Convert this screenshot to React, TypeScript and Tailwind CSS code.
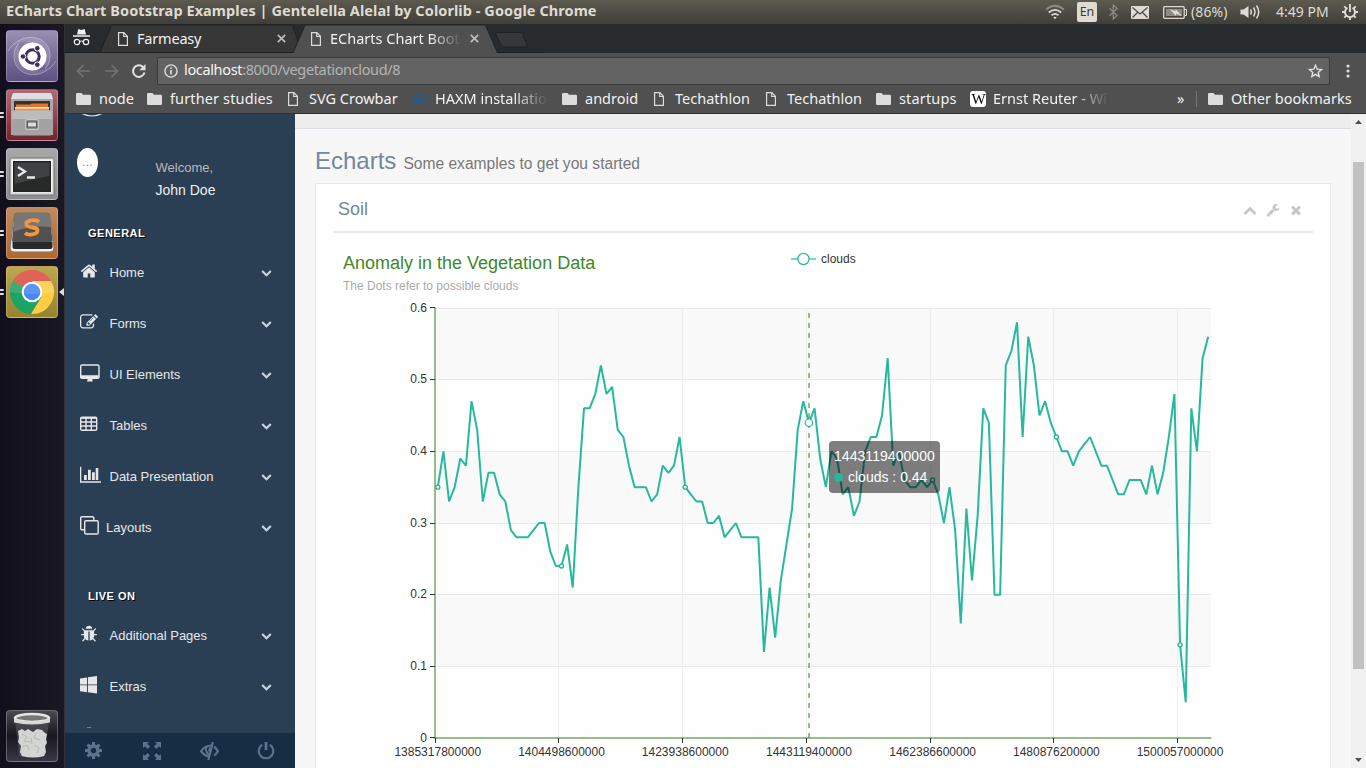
import React from "react";

const values = [
  0.35, 0.4, 0.33, 0.35, 0.39, 0.38, 0.47, 0.43, 0.33, 0.37, 0.37, 0.34, 0.33, 0.29, 0.28, 0.28, 0.28, 0.29, 0.3, 0.3,
  0.26, 0.24, 0.24, 0.27, 0.21, 0.35, 0.46, 0.46, 0.48, 0.52, 0.48, 0.49, 0.43, 0.42, 0.38, 0.35, 0.35, 0.35, 0.33, 0.34,
  0.38, 0.37, 0.38, 0.42, 0.35, 0.34, 0.33, 0.33, 0.3, 0.3, 0.31, 0.28, 0.29, 0.3, 0.28, 0.28, 0.28, 0.28, 0.12, 0.21,
  0.14, 0.22, 0.27, 0.32, 0.43, 0.47, 0.44, 0.46, 0.39, 0.35, 0.4, 0.39, 0.34, 0.35, 0.31, 0.33, 0.4, 0.42, 0.42, 0.45,
  0.53, 0.38, 0.4, 0.36, 0.35, 0.35, 0.36, 0.35, 0.36, 0.34, 0.3, 0.35, 0.29, 0.16, 0.32, 0.22, 0.31, 0.46, 0.44, 0.2,
  0.2, 0.52, 0.54, 0.58, 0.42, 0.56, 0.52, 0.45, 0.47, 0.44, 0.42, 0.4, 0.4, 0.38, 0.4, 0.41, 0.42, 0.4, 0.38, 0.38,
  0.36, 0.34, 0.34, 0.36, 0.36, 0.36, 0.34, 0.38, 0.34, 0.37, 0.42, 0.48, 0.13, 0.05, 0.46, 0.4, 0.53, 0.56,
];
const STEP = 776 / values.length;
const px = (i: number) => 435 + STEP * (i + 0.5);
const py = (v: number) => 308 + (0.6 - v) * (430 / 0.6);

const yTicks = [
  { label: "0.6", y: 308 },
  { label: "0.5", y: 379 },
  { label: "0.4", y: 451 },
  { label: "0.3", y: 523 },
  { label: "0.2", y: 594 },
  { label: "0.1", y: 666 },
  { label: "0", y: 738 },
];
const xTicks = [
  { label: "1385317800000", x: 435 },
  { label: "1404498600000", x: 558 },
  { label: "1423938600000", x: 682 },
  { label: "1443119400000", x: 806 },
  { label: "1462386600000", x: 930 },
  { label: "1480876200000", x: 1053 },
  { label: "1500057000000", x: 1177 },
];

function Chart() {
  const line = values.map((v, i) => `${px(i).toFixed(2)},${py(v).toFixed(2)}`).join(" ");
  return (
    <svg width="980" height="535" viewBox="333 233 980 535" className="block font-['Liberation_Sans',sans-serif]">
      <text x="343" y="269" fontSize="18" fill="#408829">Anomaly in the Vegetation Data</text>
      <text x="343" y="290" fontSize="12" fill="#aaaaaa">The Dots refer to possible clouds</text>
      <line x1="791" x2="816" y1="259" y2="259" stroke="#26B99A" strokeOpacity=".6" strokeWidth="2" />
      <circle cx="803.5" cy="259" r="5.6" fill="#fff" stroke="#26B99A" strokeWidth="1.3" />
      <text x="821" y="263" fontSize="12" fill="#333">clouds</text>

      {[308, 451, 594].map((y) => (
        <rect key={y} x="435" y={y} width="776" height="72" fill="#f9f9f9" />
      ))}
      {[379, 523, 666].map((y) => (
        <rect key={y} x="435" y={y} width="776" height="72" fill="#fefefe" />
      ))}
      {yTicks.slice(0, 6).map((t) => (
        <rect key={t.y} x="436" y={t.y} width="775" height="1" fill="#eaeaea" />
      ))}
      {xTicks.slice(1).map((t) => (
        <rect key={t.x} x={t.x} y="308" width="1" height="430" fill="#eeeeee" />
      ))}
      <rect x="434" y="307.5" width="2" height="431" fill="#408829" fillOpacity=".55" />
      <rect x="434" y="737" width="777.5" height="2" fill="#408829" fillOpacity=".55" />
      {yTicks.map((t) => (
        <g key={t.label}>
          <rect x="430" y={t.y === 308 ? 307 : t.y === 738 ? 737 : t.y} width="5" height="1" fill="#333" />
          <text x="427" y={t.y + 4} fontSize="12" fill="#333" textAnchor="end">{t.label}</text>
        </g>
      ))}
      {xTicks.map((t, i) => (
        <g key={t.label}>
          <rect x={t.x} y="738" width="1" height="5" fill="#333" />
          <text x={px(i * 22)} y="756" fontSize="12" fill="#333" textAnchor="middle">{t.label}</text>
        </g>
      ))}
      <polyline points={line} fill="none" stroke="#26B99A" strokeWidth="2" strokeLinejoin="bevel" />
      <line x1="809" x2="809" y1="738" y2="308" stroke="#408829" strokeOpacity=".55" strokeWidth="2" strokeDasharray="5 5" />
      {[0, 22, 44, 88, 110, 132].map((i) => (
        <circle key={i} cx={px(i)} cy={py(values[i])} r="2" fill="#fff" stroke="#26B99A" strokeWidth="1.4" />
      ))}
      <circle cx={px(66)} cy={py(0.44)} r="3.7" fill="#fff" stroke="#26B99A" strokeWidth="1.2" />
    </svg>
  );
}

const HOME =
  "M1472 992v480q0 26-19 45t-45 19h-384v-384h-256v384h-384q-26 0-45-19t-19-45v-480q0-1 .5-3t.5-3l575-474 575 474q1 2 1 6zm223-69l-62 74q-8 9-21 11h-3q-13 0-21-7l-692-577-692 577q-12 8-24 7-13-2-21-11l-62-74q-8-10-7-23.5t11-21.5l719-599q32-26 76-26t76 26l244 204v-195q0-14 9-23t23-9h192q14 0 23 9t9 23v408l219 182q10 8 11 21.5t-7 23.5z";
const EDIT =
  "M888 1184l116-116-152-152-116 116v56h96v96h56zm440-720q-16-16-33 1l-350 350q-17 17-1 33t33-1l350-350q17-17 1-33zm80 594v190q0 119-84.5 203.5t-203.5 84.5h-832q-119 0-203.5-84.5t-84.5-203.5v-832q0-119 84.5-203.5t203.5-84.5h832q63 0 117 25 15 7 18 23 3 17-9 29l-49 49q-14 14-32 8-23-6-45-6h-832q-66 0-113 47t-47 113v832q0 66 47 113t113 47h832q66 0 113-47t47-113v-126q0-13 9-22l64-64q15-15 35-7t20 29zm-96-738l288 288-672 672h-288v-288zm444 132l-92 92-288-288 92-92q28-28 68-28t68 28l152 152q28 28 28 68t-28 68z";
const BUG =
  "M1696 960q0 26-19 45t-45 19h-224q0 171-67 290l208 209q19 19 19 45t-19 45q-18 19-45 19t-45-19l-198-197q-5 5-15 13t-42 28.5-65 36.5-82 29-97 13v-896h-128v896q-51 0-101.5-13.5t-87-33-66-39-43.5-32.5l-15-14-183 207q-20 21-48 21-24 0-43-16-19-18-20.5-44.5t15.5-46.5l202-227q-58-114-58-274h-224q-26 0-45-19t-19-45 19-45 45-19h224v-294l-173-173q-19-19-19-45t19-45 45-19 45 19l173 173h844l173-173q19-19 45-19t45 19 19 45-19 45l-173 173v294h224q26 0 45 19t19 45zm-480-576h-640q0-133 93.5-226.5t226.5-93.5 226.5 93.5 93.5 226.5z";
const DOWN =
  "M1683 808l-742 741q-19 19-45 19t-45-19l-742-741q-19-19-19-45.5t19-45.5l166-165q19-19 45-19t45 19l531 531 531-531q19-19 45-19t45 19l166 165q19 19 19 45.5t-19 45.5z";
const UP =
  "M1683 1331l-166 165q-19 19-45 19t-45-19l-531-531-531 531q-19 19-45 19t-45-19l-166-165q-19-19-19-45.5t19-45.5l742-741q19-19 45-19t45 19l742 741q19 19 19 45.5t-19 45.5z";
const WRENCH =
  "M448 1472q0-26-19-45t-45-19-45 19-19 45 19 45 45 19 45-19 19-45zm644-420l-682 682q-37 37-90 37-52 0-91-37l-106-108q-38-36-38-90 0-53 38-91l681-681q39 98 114.5 173.5t173.5 114.5zm634-435q0 39-23 106-47 134-164.5 217.5t-258.5 83.5q-185 0-316.5-131.5t-131.5-316.5 131.5-316.5 316.5-131.5q58 0 121.5 16.5t107.5 46.5q16 11 16 28t-16 28l-293 169v224l193 107q5-3 79-48.5t135.5-81 70.5-35.5q15 0 23.5 10t8.5 25z";
const TIMES =
  "M1490 1322q0 40-28 68l-136 136q-28 28-68 28t-68-28l-294-294-294 294q-28 28-68 28t-68-28l-136-136q-28-28-28-68t28-68l294-294-294-294q-28-28-28-68t28-68l136-136q28-28 68-28t68 28l294 294 294-294q28-28 68-28t68 28l136 136q28 28 28 68t-28 68l-294 294 294 294q28 28 28 68z";

function Fa({ d, size = 18 }: { d: string; size?: number }) {
  return (
    <svg width={size} height={size} viewBox="0 0 1792 1792" fill="currentColor" className="shrink-0">
      <path d={d} />
    </svg>
  );
}

const Desktop = () => (
  <svg width="20" height="18" viewBox="0 0 20 18" fill="none">
    <rect x=".7" y="1" width="18.300" height="13.400" rx="1.400" stroke="currentColor" strokeWidth="1.400" />
    <path d="M1 11.200h17.800v3H1zM8 14h4l.8 3.500H7z" fill="currentColor" />
  </svg>
);
const Table = () => (
  <svg width="18" height="18" viewBox="0 0 18 18" fill="none" stroke="currentColor">
    <rect x=".7" y="2.200" width="16" height="13" rx="1.200" strokeWidth="1.400" />
    <path d="M1 3h15.500" strokeWidth="1.800" />
    <path d="M1 7h15.500M1 11h15.500M6 3v12.500M11.300 3v12.500" strokeWidth="1.400" />
  </svg>
);
const Bars = () => (
  <svg width="21" height="18" viewBox="0 0 21 18" fill="currentColor">
    <path d="M0 .7h1.300v14.600H21v1.400H0zM4 9h2.800v5H4zM8 3.700h2.800V14H8zM12 6.300h2.800V14H12zM15.700 2h2.600v12h-2.600z" />
  </svg>
);
const Clone = () => (
  <svg width="19" height="19" viewBox="0 0 19 19" fill="none" stroke="currentColor" strokeWidth="1.400">
    <rect x="4.700" y="4.700" width="13.500" height="13.300" rx="1.200" />
    <path d="M4.500 13.800H2A1.300 1.300 0 0 1 .7 12.500V2A1.300 1.300 0 0 1 2 .7h10.500a1.300 1.300 0 0 1 1.300 1.300v2.500" />
  </svg>
);
const Windows = () => (
  <svg width="18" height="18" viewBox="0 0 18 18" fill="currentColor">
    <path d="M0 2.400L7 1.400v7H0zM7.900 1.300L17 0v8.400H7.900zM0 9.200h7v7l-7-1zM7.900 9.200H17v8.400l-9.100-1.300z" />
  </svg>
);

function MenuRow({ icon, label, tight }: { icon: React.ReactNode; label: string; tight?: boolean }) {
  return (
    <li className="flex h-[51px] items-center pl-[15px] pr-[23px] text-[13px] text-[#e7e7e7]">
      <span className={tight ? "-mt-1 w-[26px]" : "-mt-1 w-[29.500px]"}>{icon}</span>
      <span className="flex-1 whitespace-nowrap">{label}</span>
      <span className="-mt-px text-[#c9d3dd]"><Fa d={DOWN} size={11} /></span>
    </li>
  );
}

function Sidebar() {
  return (
    <aside className="flex w-[230px] shrink-0 flex-col bg-[#2A3F54] font-['Liberation_Sans',sans-serif]">
      <div className="flex min-h-0 flex-1 flex-col overflow-hidden">
        <svg className="ml-[15px] shrink-0" width="24" height="4" viewBox="0 0 24 4">
          <path d="M1 -1Q12 5 23 -1" fill="none" stroke="#eaeaea" strokeWidth="1.200" />
        </svg>
        <div className="flex h-[103px] shrink-0 pl-3 pt-[30px]">
          <div className="flex h-[29px] w-[21px] justify-center rounded-[50%] bg-white pt-[7px] text-[12px] leading-[14px] tracking-[0.300px] text-[#7a8a9c]">...</div>
          <div className="ml-[57.500px] mt-[10px]">
            <div className="text-[13px] leading-[19px] text-[#BAB8B8]">Welcome,</div>
            <div className="mt-[3px] text-[14px] leading-[20px] text-[#ECF0F1]">John Doe</div>
          </div>
        </div>
        <h3 className="flex h-[26px] shrink-0 items-start pl-[23px] pt-[4px] text-[11px] font-bold leading-4 tracking-[0.500px] text-white [text-shadow:1px_1px_#000]">
          GENERAL
        </h3>
        <ul className="shrink-0">
          <MenuRow icon={<Fa d={HOME} />} label="Home" />
          <MenuRow icon={<Fa d={EDIT} />} label="Forms" />
          <MenuRow icon={<Desktop />} label="UI Elements" />
          <MenuRow icon={<Table />} label="Tables" />
          <MenuRow icon={<Bars />} label="Data Presentation" />
          <MenuRow icon={<Clone />} label="Layouts" tight />
        </ul>
        <h3 className="flex h-[57px] shrink-0 items-end pb-[6px] pl-[23px] text-[11px] font-bold tracking-[0.500px] text-white [text-shadow:1px_1px_#000]">
          LIVE ON
        </h3>
        <ul className="shrink-0">
          <MenuRow icon={<Fa d={BUG} />} label="Additional Pages" />
          <MenuRow icon={<Windows />} label="Extras" />
        </ul>
        <div className="ml-[22px] mt-[15px] h-px w-1 shrink-0 bg-[#70808f]" />
      </div>
      <div className="flex h-[35px] shrink-0 items-center justify-between bg-[#172D44] pl-5 pr-5 text-[#5A738E]">
        <svg width="17" height="17" viewBox="0 0 17 17" fill="none" stroke="currentColor">
          <circle cx="8.500" cy="8.500" r="4.500" strokeWidth="3.600" />
          <path d="M8.500 0v3M8.500 14v3M0 8.500h3M14 8.500h3M2.500 2.500l2.100 2.100M12.400 12.400l2.100 2.100M2.500 14.500l2.100-2.100M12.400 4.600l2.100-2.100" strokeWidth="3" />
        </svg>
        <svg className="ml-[3px]" width="18" height="18" viewBox="0 0 18 18" fill="currentColor">
          <path d="M0 0h6L4.200 1.800 7 4.600 4.600 7 1.800 4.200 0 6zM18 0v6l-1.800-1.800L13.400 7 11 4.600l2.800-2.800L12 0zM0 18v-6l1.800 1.800L4.600 11 7 13.400l-2.800 2.800L6 18zM18 18h-6l1.800-1.800L11 13.400 13.400 11l2.800 2.800L18 12z" />
        </svg>
        <svg width="19" height="18" viewBox="0 0 19 18" fill="none" stroke="currentColor" strokeWidth="2.200">
          <path d="M8.500 14.300C5 13.700 2.700 11.600 1.200 9.200 3.300 5.800 6 3.700 11 3.500M14 4.700c1.700 1.300 3 2.900 3.900 4.500-.9 1.700-2 3-3.800 4.300" />
          <path d="M6.300 5c-1 3 .3 6 2.700 7.300M10 5.500L9 9.500" strokeWidth="2" />
          <path d="M12.900 0L8.300 18" strokeWidth="2.200" />
        </svg>
        <svg width="18" height="18" viewBox="0 0 18 18" fill="none" stroke="currentColor" strokeWidth="2.200">
          <path d="M5.200 2.700a7.300 7.300 0 1 0 7.600 0" />
          <path d="M9 0v8" strokeWidth="2.800" />
        </svg>
      </div>
    </aside>
  );
}

function Main() {
  return (
    <main className="flex min-w-0 flex-1 flex-col overflow-hidden bg-[#F7F7F7] font-['Liberation_Sans',sans-serif]">
      <div className="h-[15px] shrink-0 border-b border-[#D9DEE4] bg-[#EDEDED]" />
      <h3 className="flex h-[54px] shrink-0 items-baseline pl-5 pt-[14px] text-[24px] leading-[36px] text-[#73879C]">
        Echarts<small className="ml-[7px] text-[15.600px] text-[#777]">Some examples to get you started</small>
      </h3>
      <section className="relative ml-5 mr-5 flex shrink-0 flex-col border border-[#E6E9ED] bg-white px-[17px]">
        <header className="flex h-[49px] items-center justify-between border-b-2 border-[#E6E9ED] pl-[5px] pr-[10px]">
          <h2 className="mt-[3px] text-[18px] text-[#73879C]">Soil</h2>
          <div className="mt-[5px] flex items-center gap-[9px] text-[#c5c7cb]">
            <Fa d={UP} size={14} />
            <Fa d={WRENCH} size={14} />
            <Fa d={TIMES} size={14} />
          </div>
        </header>
        <Chart />
        <div className="absolute left-[513px] top-[257px] h-[52px] w-[111px] rounded bg-black/50 p-[5px] text-[14px] leading-[21px] text-white">
          <div className="tracking-[0.050px]">1443119400000</div>
          <div className="flex items-center">
            <span className="mr-[5px] size-[9px] rounded-full bg-[#26B99A]" />clouds : 0.44
          </div>
        </div>
      </section>
    </main>
  );
}

const Folder = () => (
  <svg width="15" height="12" viewBox="0 0 15 12" fill="#dcdcdc">
    <path d="M0 1.200Q0 0 1.200 0H5.500L7 1.800h6.800q1.200 0 1.200 1.200v7.800q0 1.200-1.200 1.200H1.200Q0 12 0 10.800z" />
  </svg>
);
const Page = () => (
  <svg width="10" height="14" viewBox="0 0 10 14" fill="none" stroke="#dcdcdc">
    <path d="M.6.6h5.200l3.600 3.700v9.100H.6z" strokeWidth="1.200" />
    <path d="M5.700.6v3.900h3.700" strokeWidth="1.200" />
  </svg>
);
const Intel = () => (
  <svg width="17" height="12" viewBox="0 0 16 12" fill="none" stroke="#17619f">
    <path d="M3 2.500C8-.5 15-.3 15.200 3.500c.1 2-1.500 3.600-3 4.500M.7 8.200c-.7-1.700.5-3.500 1.800-4.500M.7 8.200c1 3.300 8 3.300 12.300.6" strokeWidth="1.300" />
    <path d="M4 5v3.300M6 8.300V6q1.500-1 1.800.3v2M9.500 4.500v3.300M11 6.500h1.700M13.300 3.500v4" strokeWidth="1.100" />
  </svg>
);
const Wiki = () => (
  <span className="flex size-4 items-center justify-center rounded-[3px] bg-white font-['Liberation_Serif',serif] text-[15px] leading-none tracking-[-1px] text-black">W</span>
);

function Mark({ icon, label, cls, file }: { icon: React.ReactNode; label: string; cls: string; file?: boolean }) {
  return (
    <div className={"flex shrink-0 items-center " + cls}>
      <span className={file ? "w-[21px] shrink-0" : "w-[23px] shrink-0"}>{icon}</span>
      <span className="whitespace-nowrap">{label}</span>
    </div>
  );
}

const Close = () => (
  <svg width="9" height="9" viewBox="0 0 9 9" stroke="#bdbdbd" strokeWidth="1.700">
    <path d="M.8.8l7.400 7.400M8.200.8L.8 8.200" />
  </svg>
);

function Browser() {
  return (
    <div className="flex h-[90px] shrink-0 flex-col bg-[#505050] font-['Noto_Sans',sans-serif] text-[14.500px] text-[#f2f2f2]">
      <div className="relative flex h-[29px] shrink-0 items-center bg-[#272b2e]">
        <svg className="absolute left-0 top-0" width="480" height="29" viewBox="0 0 480 29">
          <path d="M35 28.500L46 2.500Q47 1 48.500 1H225Q227 1 228 2.500L237 28.500z" fill="#373737" stroke="#1e2022" />
          <path d="M0 28.500H228.500L239.500 2.500Q240.500 1 242 1H418Q420 1 421 2.500L432 28.500H480" fill="none" stroke="#1e2022" />
          <path d="M228.500 29L240 2.500Q241 1.500 242 1.500H418Q419.500 1.500 420.500 2.500L432 29z" fill="#505050" />
          <path d="M432 8.500h23q2 0 2.700 1.500l4.500 11.500q.5 1.500-1 1.500H439q-2 0-2.700-1.500L430.800 10q-.5-1.500 1.200-1.500z" fill="#373737" stroke="#1e2022" />
        </svg>
        <svg className="relative -mt-0.5 ml-2" width="17" height="17" viewBox="0 0 17 17" fill="#f2f2f2">
          <path d="M5.300 0L8.500 1l3.200-1L13 5.500H4zM0 6.300h17v1.500H0z" />
          <circle cx="4" cy="13" r="2.700" fill="none" stroke="#f2f2f2" strokeWidth="1.200" />
          <circle cx="13" cy="13" r="2.700" fill="none" stroke="#f2f2f2" strokeWidth="1.200" />
          <path d="M6.500 12.500q2-1 4 0" fill="none" stroke="#f2f2f2" />
        </svg>
        <div className="relative ml-[28px] flex w-[193px] items-center">
          <Page />
          <span className="ml-[9px] w-[140px] tracking-[-0.200px]">Farmeasy</span>
          <Close />
        </div>
        <div className="relative flex items-center">
          <Page />
          <span className="ml-[9px] w-[132px] whitespace-nowrap [mask-image:linear-gradient(to_right,#000_75%,transparent)]">ECharts Chart Boot</span>
          <span className="ml-2"><Close /></span>
        </div>
      </div>
      <div className="flex h-[35px] shrink-0 items-center pl-[11px] pr-[16px]">
        <svg width="72" height="16" viewBox="0 0 72 16" fill="none">
          <path d="M14 8H2M7.500 2L1.500 8l6 6M29 8h12M35.500 2l6 6-6 6" stroke="#737373" strokeWidth="1.700" />
          <path d="M67.200 4.200A5.800 5.800 0 1 0 68.500 9.500" stroke="#e0e0e0" strokeWidth="2" />
          <path d="M69.500 1v6.200h-6.200z" fill="#e0e0e0" />
        </svg>
        <div className="ml-[9px] flex h-7 flex-1 items-center rounded-[2px] border border-[#3a3a3a] bg-[#636363] pl-[6px] pr-[6px] text-[#b4b4b4]">
          <svg width="14" height="14" viewBox="0 0 14 14" fill="none" stroke="#ddd" strokeWidth="1.400">
            <circle cx="7" cy="7" r="6.100" />
            <path d="M7 6v4.500M7 3.200v1.600" strokeWidth="1.700" />
          </svg>
          <span className="-mt-px ml-[6px] flex-1 whitespace-nowrap tracking-[-0.350px]"><span className="text-[#f5f5f5]">localhost</span>:8000/vegetationcloud/8</span>
          <svg width="15" height="14" viewBox="0 0 15 14" fill="none" stroke="#e0e0e0" strokeWidth="1.400">
            <path d="M7.500 1.200l1.700 4 4.300.4-3.300 2.800 1 4.200-3.700-2.200-3.700 2.200 1-4.200L1.500 5.600l4.300-.4z" />
          </svg>
        </div>
        <svg className="ml-[16px]" width="4" height="14" viewBox="0 0 4 14" fill="#dcdcdc">
          <circle cx="2" cy="2" r="1.600" />
          <circle cx="2" cy="7" r="1.600" />
          <circle cx="2" cy="12" r="1.600" />
        </svg>
      </div>
      <div className="flex h-[26px] shrink-0 items-center border-b border-[#303030] pb-[3px] pl-[11px]">
        <Mark icon={<Folder />} label="node" cls="w-[71px]" />
        <Mark icon={<Folder />} label="further studies" cls="w-[141px] tracking-[0.130px]" />
        <Mark icon={<Page />} label="SVG Crowbar" cls="w-[124px]" file />
        <Mark icon={<Intel />} label="HAXM installatio" cls="w-[136px] [mask-image:linear-gradient(to_right,#000_75%,transparent)]" />
        <span className="w-[14px]" />
        <Mark icon={<Folder />} label="android" cls="w-[92px]" />
        <Mark icon={<Page />} label="Techathlon" cls="w-[112px]" file />
        <Mark icon={<Page />} label="Techathlon" cls="w-[110px]" file />
        <Mark icon={<Folder />} label="startups" cls="w-[94px] tracking-[0.150px]" />
        <Mark icon={<Wiki />} label="Ernst Reuter - Wi" cls="w-[139px] [mask-image:linear-gradient(to_right,#000_75%,transparent)]" />
        <span className="ml-[68px] w-[19px]">»</span>
        <span className="mr-[11px] h-4 w-px bg-[#777]" />
        <Mark icon={<Folder />} label="Other bookmarks" cls="w-[150px] tracking-[0.050px]" />
      </div>
    </div>
  );
}

function TopBar() {
  return (
    <div className="flex h-6 shrink-0 items-center bg-gradient-to-b from-[#5d5a4f] to-[#3f3e39] pl-[6px] pr-2 font-['Noto_Sans',sans-serif] text-[14.500px] text-[#dfdbd2]">
      <span className="-mt-0.5 flex-1 whitespace-nowrap text-[14.500px] font-bold tracking-[0.070px]">ECharts Chart Bootstrap Examples | Gentelella Alela! by Colorlib - Google Chrome</span>
      <svg width="20" height="16" viewBox="0 0 20 16" fill="none" strokeWidth="1.700">
        <path d="M1 5.500q9-7.500 18 0" stroke="#8d8a80" />
        <path d="M3.800 8.500q6.200-5.200 12.400 0M6.500 11.300q3.500-3 7 0" stroke="#dfdbd2" />
        <path d="M8.300 13.300q1.700-1.300 3.400 0L10 15.300z" fill="#dfdbd2" />
      </svg>
      <span className="ml-3 flex h-5 w-5 items-center justify-center rounded-[2px] bg-[#dfdbd2] text-[12.500px] text-[#3c3b37]">En</span>
      <svg className="ml-3" width="9" height="16" viewBox="0 0 9 16" fill="none" stroke="#8d8a80" strokeWidth="1.300">
        <path d="M.5 4.200l7.500 7.300L4.300 15V1L8 4.500.5 11.800" />
      </svg>
      <svg className="ml-[13px]" width="18" height="13" viewBox="0 0 18 13">
        <rect width="18" height="13" rx="1" fill="#dfdbd2" />
        <path d="M1.500 1.500L9 8l7.500-6.500M1.500 11.500l5-5M16.500 11.500l-5-5" fill="none" stroke="#4a4842" strokeWidth="1.200" />
      </svg>
      <svg className="ml-[14px]" width="24" height="13" viewBox="0 0 24 13" fill="none" stroke="#dfdbd2">
        <rect x=".7" y=".7" width="20.500" height="11.600" rx="1" strokeWidth="1.300" />
        <rect x="3" y="3" width="16" height="7" fill="#8d8a80" stroke="none" />
        <path d="M22 3.500h1.500v6H22" />
        <path d="M6.500 3l6 2.200V3l6.500 7-6-2.200V10z" fill="#dfdbd2" stroke="none" />
      </svg>
      <span className="-mt-px ml-1 w-[37px] whitespace-nowrap text-[14px] tracking-[0.100px]">(86%)</span>
      <svg className="ml-3" width="21" height="16" viewBox="0 0 21 16" fill="none" stroke="#dfdbd2" strokeWidth="1.500">
        <path d="M.5 5.500h3L8.500 2v12l-5-3.500h-3z" fill="#dfdbd2" stroke="none" />
        <path d="M10.500 5.500q1.700 2.500 0 5M13.500 3.500q3 4.500 0 9M16.500 1.500q4.500 6.500 0 13" />
      </svg>
      <span className="-mt-px ml-[15px] w-[53px] whitespace-nowrap text-[14px]">4:49 PM</span>
      <svg className="ml-[13px]" width="16" height="16" viewBox="0 0 16 16" fill="none" stroke="#dfdbd2">
        <path d="M5.500 3.800a5 5 0 1 0 5 0" strokeWidth="1.900" />
        <path d="M8 0v8M0 8h3M13 8h3M8 13v3M2.300 2.300l2 2M13.700 2.300l-2 2M2.300 13.700l2-2M13.700 13.700l-2-2" strokeWidth="1.900" />
      </svg>
    </div>
  );
}

function Tile({ children, cls, open }: { children: React.ReactNode; cls: string; open?: boolean }) {
  return (
    <div className="flex items-center">
      <div className="flex w-[6px] flex-col gap-[2px]">
        {open && <><span className="h-[2px] w-1 rounded-r bg-[#ddd]" /><span className="h-[2px] w-1 rounded-r bg-[#ddd]" /></>}
      </div>
      <div className={"flex size-[52px] items-center justify-center rounded-[4px] border border-white/25 bg-gradient-to-b " + cls}>{children}</div>
    </div>
  );
}

function Launcher() {
  return (
    <nav className="flex w-[65px] shrink-0 flex-col gap-[7px] border-r border-[#333238] bg-gradient-to-r from-[#120f1c] to-[#1b1826] pb-[6px] pt-[6px]">
      <Tile cls="from-[#9890b0] to-[#5c5184]">
        <svg width="50" height="50" viewBox="0 0 50 50" fill="none">
          <path d="M1 20C12 3 33 2 41 16c4 8 2 17-3 22C40 24 33 12 20 11 12 10 5 14 1 20z" fill="#fff" fillOpacity=".14" />
          <path d="M49 30C38 47 17 48 9 34 5 26 7 17 12 12c-2 14 5 26 18 27 8 1 15-3 19-9z" fill="#fff" fillOpacity=".14" />
          <path d="M1 20C12 3 33 2 41 16c4 8 2 17-3 22M49 30C38 47 17 48 9 34 5 26 7 17 12 12" stroke="#fff" strokeOpacity=".3" />
          <circle cx="25.500" cy="25.500" r="14" fill="#fff" />
          <circle cx="25.500" cy="25.500" r="6.700" stroke="#3c2f5c" strokeWidth="3" />
          <circle cx="16" cy="25.500" r="2.800" fill="#3c2f5c" stroke="#fff" />
          <circle cx="30.300" cy="17.300" r="2.800" fill="#3c2f5c" stroke="#fff" />
          <circle cx="30.300" cy="33.700" r="2.800" fill="#3c2f5c" stroke="#fff" />
        </svg>
      </Tile>
      <Tile open cls="from-[#b06a78] to-[#79202e]">
        <svg width="50" height="50" viewBox="0 0 50 50">
          <path d="M6 3h38l2 6v36H4V9z" fill="#a9a9a9" />
          <path d="M6 3h38l2 6H4z" fill="#dedede" />
          <rect x="7" y="11" width="36" height="12" fill="#333" />
          <path d="M9 14.500h14l2-1h16v8H9z" fill="#e57328" />
          <path d="M8 17h34v4H8z" fill="#f6ead8" />
          <path d="M8 18.500h34V22H8z" fill="#f0953d" />
          <path d="M6 20.500h38l1 2v21q0 2-2 2H7q-2 0-2-2v-21z" fill="#a3a3a3" />
          <path d="M6 20.500h38l1 2V29H5v-6.500z" fill="#bcbcbc" />
          <rect x="18.500" y="29.500" width="13" height="10" rx="2" fill="#8a8a8a" stroke="#ccc" />
          <rect x="20.500" y="32" width="9" height="5" fill="#ddd" stroke="#555" />
        </svg>
      </Tile>
      <Tile open cls="from-[#a8a8aa] to-[#8d8d90]">
        <svg width="50" height="50" viewBox="0 0 50 50">
          <rect x="3" y="9" width="44" height="37" rx="1.500" fill="#d8d8d8" stroke="#777" />
          <rect x="4.500" y="10.500" width="41" height="33" fill="#f4f4f4" />
          <rect x="6" y="12" width="38" height="31" fill="#222" />
          <path d="M7.500 13.500h35V27l-35 8z" fill="#3f4242" />
          <path d="M7.500 35l35-8v14.500h-35z" fill="#282a2a" />
          <path d="M11 18l7 4.500-7 4.500M20 28.500h8" fill="none" stroke="#e8e8e8" strokeWidth="2.300" />
        </svg>
      </Tile>
      <Tile open cls="from-[#c2895c] to-[#b0682a]">
        <svg width="50" height="50" viewBox="0 0 50 50">
          <path d="M7 8q0-3 3-3h30q3 0 3 3l4 32q0 4-4 4H7q-4 0-4-4z" fill="#efefef" stroke="#777" />
          <path d="M5.500 34h40v5q0 2-3 2h-34q-3 0-3-2z" fill="#292929" />
          <path d="M7.500 7q0-2 2-2h31q2 0 2 2l3 26q0 1-2 1H7q-2 0-2-1z" fill="#515151" />
          <path d="M7.500 7q0-2 2-2h31q2 0 2 2l1.500 12Q25 17 6.500 24z" fill="#777" />
          <path d="M32 14q-3-2.500-8.500-1.500-5.500 1.500-4 4.500 1 2 6 2.500t5 3q0 3-5.500 4-4.500.5-7-1.500" fill="none" stroke="#f79538" strokeWidth="3.800" />
        </svg>
      </Tile>
      <div className="flex items-center">
        <Tile open cls="from-[#bda64f] to-[#95842e]">
          <svg width="50" height="50" viewBox="0 0 50 50">
            <path d="M25 25L5.900 14A22 22 0 0 1 44 14z" fill="#dd4b3e" />
            <path d="M25 25L5.900 14A22 22 0 0 0 24 47L34.500 30z" fill="#1da362" />
            <path d="M25 14h19A22 22 0 0 1 24 47l10.500-17z" fill="#ffcd42" />
            <circle cx="25" cy="25" r="10.300" fill="#fff" />
            <circle cx="25" cy="25" r="8.300" fill="#4688f1" />
            <path d="M3 25a22 22 0 0 1 44 0q-22 4-44 0z" fill="#fff" fillOpacity=".13" />
          </svg>
        </Tile>
        <svg width="6" height="8" viewBox="0 0 6 8"><path d="M6 0v8L1 4z" fill="#ddd" /></svg>
      </div>
      <div className="flex-1" />
      <Tile cls="from-[#4a4852] via-[#1a1722] to-[#3a3842]">
        <svg width="50" height="50" viewBox="0 0 50 50">
          <path d="M8 9l4 34q0 3 4 3h18q4 0 4-3l4-34z" fill="#999" fillOpacity=".25" />
          <path d="M11 20l4-2 3 2 3-2 5 3 4-3 5 1 3 3 2 1-1 5 1 4-2 3 1 6-2 4q-11 3-22 0l-2-4 1-6-3-4 1-4z" fill="#d2d5d2" />
          <path d="M15 23l5 3-3 4 6 1M29 22l-2 5 6 2M15 36l5-2 2 5M27 34l5 3-2 5M24 27l1 6" fill="none" stroke="#b4b8b4" />
          <ellipse cx="25" cy="7" rx="17" ry="4" fill="#777" stroke="#e6e6e2" strokeWidth="2.500" />
          <path d="M7 8q18 6 36 0v3.500q-18 4-36 0z" fill="#d8d8d4" />
        </svg>
      </Tile>
    </nav>
  );
}

export default function App() {
  return (
    <div className="flex h-[768px] w-[1366px] flex-col overflow-hidden bg-[#15121e]">
      <TopBar />
      <div className="flex min-h-0 flex-1">
        <Launcher />
        <div className="flex min-w-0 flex-1 flex-col">
          <Browser />
          <div className="flex min-h-0 flex-1">
            <Sidebar />
            <Main />
            <div className="flex w-[15px] shrink-0 flex-col items-center bg-[#f1f1f1]">
              <svg className="mt-[6px]" width="7" height="4" viewBox="0 0 7 4" fill="#505050"><path d="M0 4L3.500 0 7 4z" /></svg>
              <div className="mt-[38px] h-[507px] w-[11px] bg-[#c1c1c1]" />
              <svg className="mb-[6px] mt-auto" width="7" height="4" viewBox="0 0 7 4" fill="#505050"><path d="M0 0h7L3.500 4z" /></svg>
            </div>
          </div>
        </div>
      </div>
    </div>
  );
}
